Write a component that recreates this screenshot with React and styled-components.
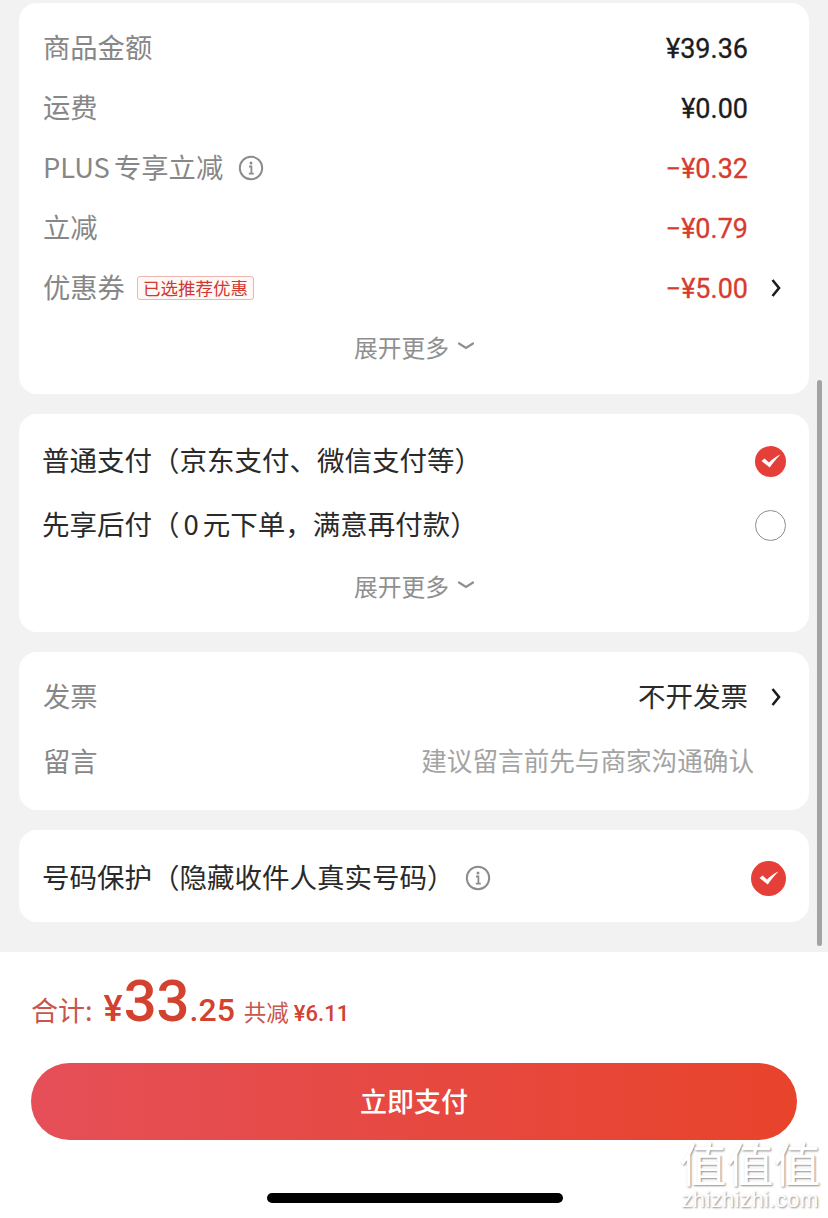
import React from 'react'
import styled, { createGlobalStyle } from 'styled-components'

const GlobalStyle = createGlobalStyle`
  html, body {
    margin: 0;
    padding: 0;
    background: #f2f2f2;
  }
  * {
    box-sizing: border-box;
  }
`

const Page = styled.div`
  position: relative;
  width: 828px;
  height: 1218px;
  overflow: hidden;
  display: flex;
  flex-direction: column;
  background: #f2f2f2;
  font-family: 'Noto Sans CJK SC', 'Noto Sans', sans-serif;
`

const Content = styled.div`
  flex: 1;
  display: flex;
  flex-direction: column;
  gap: 20px;
  padding: 3px 19px 0;
`

const Card = styled.section`
  display: flex;
  flex-direction: column;
  padding: ${(props) => props.$pad || '15px 23px 16px 23px'};
  background: #fff;
  border-radius: 18px;
`

const Row = styled.div`
  display: flex;
  align-items: center;
  height: ${(props) => props.$h || 60}px;
`

const Label = styled.span`
  margin: -4px 0 0 1px;
  font-size: 27.3px;
  line-height: 36px;
  word-spacing: -2px;
  color: #878787;
  white-space: nowrap;
`

const Spacer = styled.div`
  flex: 1;
`

const Value = styled.span`
  margin-top: 2px;
  font-family: 'Roboto', sans-serif;
  font-size: 27px;
  font-weight: 400;
  line-height: 36px;
  -webkit-text-stroke: 0.3px currentColor;
  color: ${(props) => (props.$red ? '#d83c2e' : '#1c1c1c')};
`

const Trail = styled.div`
  width: 38px;
  display: flex;
  align-items: center;
  padding-left: 23px;
`

const InfoWrap = styled.span`
  display: inline-flex;
  margin-left: ${(props) => props.$gap || 15}px;
  color: #8c8c8c;
`

const Tag = styled.span`
  margin-left: 12px;
  height: 24px;
  padding: 0 5px;
  display: inline-flex;
  align-items: center;
  font-size: 17.5px;
  line-height: 22px;
  color: #cf3a30;
  background: #fff8f7;
  border: 1px solid #eeb5ae;
  border-radius: 3px;
  white-space: nowrap;
`

const Expand = styled.div`
  height: 60px;
  padding-bottom: 4px;
  display: flex;
  align-items: center;
  justify-content: center;
  gap: 9px;
  font-size: 23.8px;
  color: #8f8f8f;
`

const Plain = styled.span`
  margin-top: -4px;
  font-size: 27.5px;
  line-height: 36px;
  color: #2a2a2a;
  white-space: nowrap;
`

const Digit = styled.span`
  margin: 0 4px;
`

const Hint = styled.span`
  margin-top: -4px;
  margin-right: 32px;
  font-size: 25.6px;
  line-height: 36px;
  color: #a3a3a3;
  white-space: nowrap;
`

const Radio = styled.span`
  width: ${(props) => props.$size || 31}px;
  height: ${(props) => props.$size || 31}px;
  display: inline-flex;
  align-items: center;
  justify-content: center;
  border-radius: 50%;
  background: ${(props) => (props.$on ? '#e43f38' : '#fff')};
  border: ${(props) => (props.$on ? 'none' : '1.5px solid #8e8e8e')};
`

const ScrollBar = styled.div`
  position: absolute;
  left: 817px;
  top: 380px;
  width: 5px;
  height: 566px;
  border-radius: 3px;
  background: #a3a3a3;
`

const Footer = styled.footer`
  height: 266px;
  display: flex;
  flex-direction: column;
  padding: 15px 31px 0;
  background: #fff;
`

const Totals = styled.div`
  height: 96px;
  display: flex;
  align-items: baseline;
  color: #d3412f;
  white-space: nowrap;
`

const TotalLabel = styled.span`
  font-size: 27px;
  line-height: 59px;
  color: #c9564b;
  margin-right: 11px;
`

const Amount = styled.span`
  font-family: 'Roboto', sans-serif;
  font-size: ${(props) => props.$size}px;
  font-weight: ${(props) => props.$weight || 500};
  letter-spacing: ${(props) => props.$track || 0}px;
  margin-right: ${(props) => props.$mr || 0}px;
`

const Saved = styled.span`
  font-size: 22.5px;
  color: #c9564b;
  margin-right: 5px;
`

const PayButton = styled.button`
  width: 766px;
  height: 77px;
  flex-shrink: 0;
  padding: 0 0 2px;
  border: none;
  border-radius: 39px;
  background: linear-gradient(90deg, #e54f58 0%, #e8432b 100%);
  color: #fff;
  font-family: inherit;
  font-size: 27px;
  font-weight: 500;
`

const HomeBar = styled.div`
  position: absolute;
  left: 267px;
  top: 1193px;
  width: 296px;
  height: 10px;
  border-radius: 5px;
  background: #000;
`

const Watermark = styled.div`
  position: absolute;
  left: 678px;
  top: 1137px;
  width: 144px;
  display: flex;
  flex-direction: column;
  align-items: center;
  color: #fff;
  text-shadow: 1px 1px 2px rgba(0, 0, 0, 0.45);
`

const MarkGlyphs = styled.div`
  font-size: 47px;
  line-height: 50px;
  font-weight: 400;
  white-space: nowrap;
`

const MarkUrl = styled.div`
  font-family: 'Liberation Sans', sans-serif;
  font-size: 22px;
  line-height: 25px;
  letter-spacing: 0.4px;
`

const InfoIcon = () => (
  <svg width='26' height='26' viewBox='0 0 26 26' fill='none' stroke='currentColor'>
    <circle cx='13' cy='13' r='11.2' strokeWidth='2' />
    <circle cx='13' cy='8' r='1.5' fill='currentColor' stroke='none' />
    <path d='M11 11.5h2.4v7M10.8 18.6h5' strokeWidth='1.8' />
  </svg>
)

const Chevron = () => (
  <svg width='10' height='18' viewBox='0 0 10 18' fill='none'>
    <path d='M1.500 1 8 9 1.500 17' stroke='#1c1c1c' strokeWidth='2.6' />
  </svg>
)

const ChevronDown = () => (
  <svg width='16' height='8' viewBox='0 0 16 8' fill='none'>
    <path d='M1 1.500 8 6 15 1.500' stroke='#8f8f8f' strokeWidth='2.2' strokeLinecap='round' />
  </svg>
)

const Check = () => (
  <svg width='20' height='14' viewBox='0 0 20 14' fill='#fff'>
    <path d='M0.500 7 3.500 4.500 8 8.500C11.500 5 15 2.500 19.500 0.500 15.500 4.500 12 8.500 8.800 13.500Z' />
  </svg>
)

const More = () => (
  <Expand>
    展开更多
    <ChevronDown />
  </Expand>
)

export default function App() {
  return (
    <Page>
      <GlobalStyle />
      <Content>
        <Card>
          <Row>
            <Label>商品金额</Label>
            <Spacer />
            <Value>¥39.36</Value>
            <Trail />
          </Row>
          <Row>
            <Label>运费</Label>
            <Spacer />
            <Value>¥0.00</Value>
            <Trail />
          </Row>
          <Row>
            <Label>PLUS 专享立减</Label>
            <InfoWrap>
              <InfoIcon />
            </InfoWrap>
            <Spacer />
            <Value $red>−¥0.32</Value>
            <Trail />
          </Row>
          <Row>
            <Label>立减</Label>
            <Spacer />
            <Value $red>−¥0.79</Value>
            <Trail />
          </Row>
          <Row>
            <Label>优惠券</Label>
            <Tag>已选推荐优惠</Tag>
            <Spacer />
            <Value $red>−¥5.00</Value>
            <Trail>
              <Chevron />
            </Trail>
          </Row>
          <More />
        </Card>

        <Card $pad='15px 23px 15px 23px'>
          <Row $h={64}>
            <Plain>普通支付（京东支付、微信支付等）</Plain>
            <Spacer />
            <Radio $on>
              <Check />
            </Radio>
          </Row>
          <Row $h={64}>
            <Plain>
              先享后付（<Digit>0</Digit>元下单，满意再付款）
            </Plain>
            <Spacer />
            <Radio />
          </Row>
          <More />
        </Card>

        <Card $pad='12px 23px 16px 23px'>
          <Row $h={65}>
            <Label>发票</Label>
            <Spacer />
            <Plain>不开发票</Plain>
            <Trail>
              <Chevron />
            </Trail>
          </Row>
          <Row $h={65}>
            <Label>留言</Label>
            <Spacer />
            <Hint>建议留言前先与商家沟通确认</Hint>
          </Row>
        </Card>

        <Card $pad='4px 23px 0 23px'>
          <Row $h={88}>
            <Plain>号码保护（隐藏收件人真实号码）</Plain>
            <InfoWrap $gap={10}>
              <InfoIcon />
            </InfoWrap>
            <Spacer />
            <Radio $on $size={35}>
              <Check />
            </Radio>
          </Row>
        </Card>
      </Content>

      <Footer>
        <Totals>
          <TotalLabel>合计:</TotalLabel>
          <Amount $size={36} $mr={1}>
            ¥
          </Amount>
          <Amount $size={58}>33</Amount>
          <Amount $size={32} $mr={9}>
            .25
          </Amount>
          <Saved>共减</Saved>
          <Amount $size={22}>¥6.11</Amount>
        </Totals>
        <PayButton>立即支付</PayButton>
      </Footer>

      <ScrollBar />
      <HomeBar />
      <Watermark>
        <MarkGlyphs>值值值</MarkGlyphs>
        <MarkUrl>zhizhizhi.com</MarkUrl>
      </Watermark>
    </Page>
  )
}
